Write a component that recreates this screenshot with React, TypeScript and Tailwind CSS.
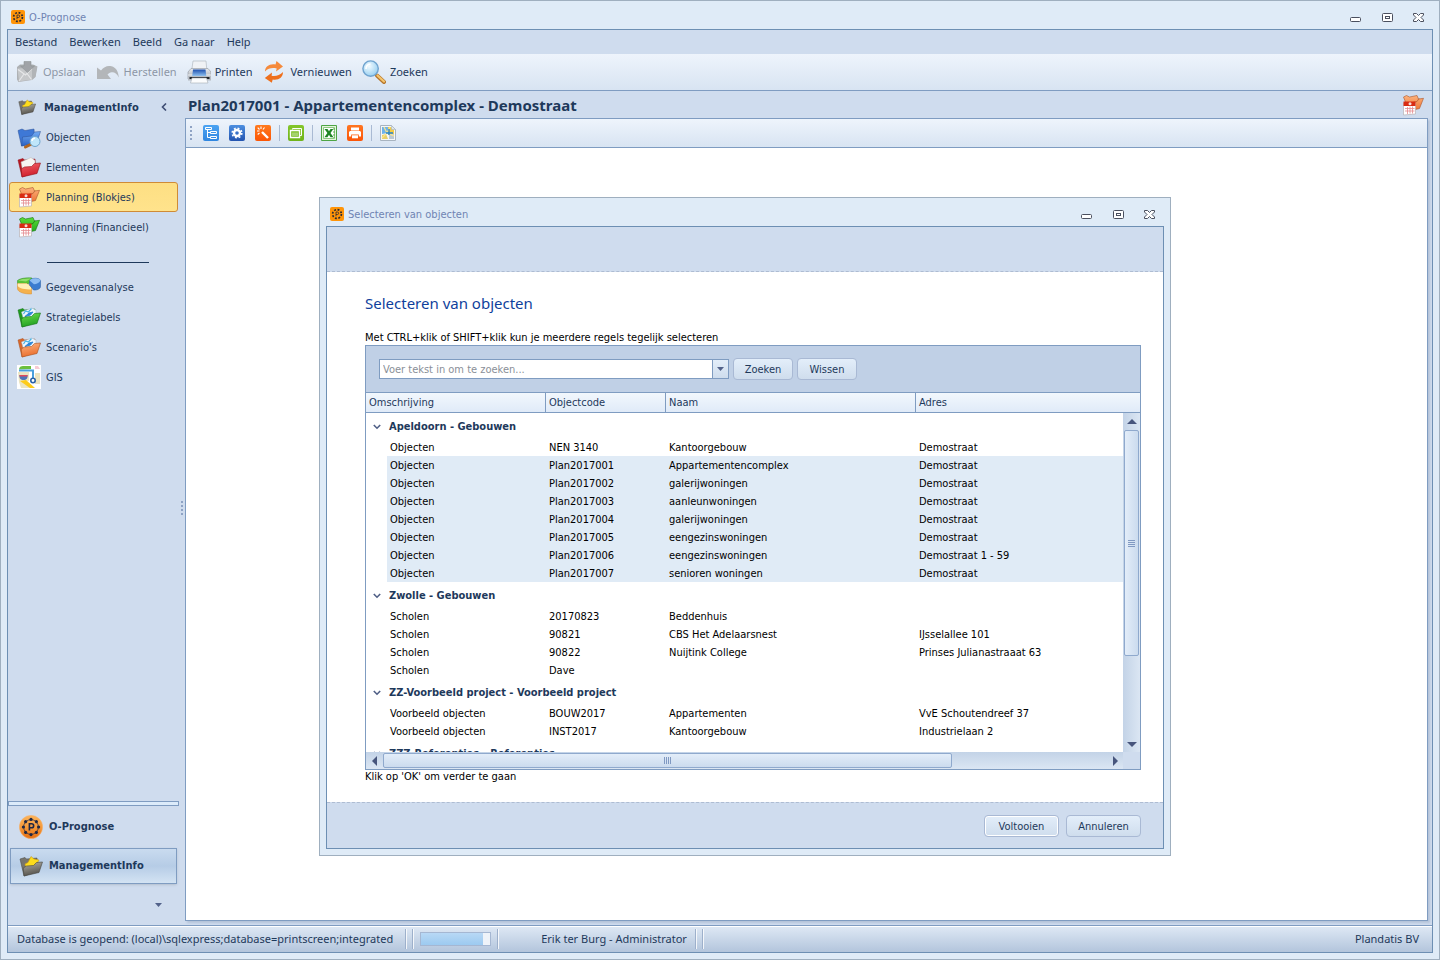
import { useState } from "react";
import type { ReactNode } from "react";
import clsx from "clsx";

/* ---------- icons ---------- */

function AppIcon() {
  return (
    <svg width="14" height="14" viewBox="0 0 14 14">
      <rect width="14" height="14" rx="2" fill="#ff9408" />
      <circle cx="7" cy="7" r="4.4" fill="none" stroke="#2b2a33" strokeWidth="1.7" strokeDasharray="1.9 1.555" />
      <path d="M6 9.2V5h1.4a1.2 1.2 0 0 1 0 2.5H6" fill="none" stroke="#2b2a33" strokeWidth=".8" />
    </svg>
  );
}

function AppIconRound() {
  const dots = [0, 45, 90, 135, 180, 225, 270, 315];
  return (
    <svg width="24" height="24" viewBox="0 0 24 24">
      <defs>
        <linearGradient id="orb" x1="0" y1="0" x2="0" y2="1">
          <stop offset="0" stopColor="#fbb35a" />
          <stop offset=".5" stopColor="#f59a3a" />
          <stop offset="1" stopColor="#e56d10" />
        </linearGradient>
      </defs>
      <circle cx="12" cy="12" r="11.6" fill="url(#orb)" stroke="#f6b26c" strokeWidth=".6" />
      <circle cx="12" cy="12" r="7.4" fill="none" stroke="#1f2744" strokeWidth=".7" />
      {dots.map((d) => (
        <circle key={d} cx="12" cy="4.4" r="1.6" fill="#1f2744" transform={`rotate(${d} 12 12)`} />
      ))}
      <path d="M10.4 15.6V8.700h2.200a2 2 0 0 1 0 4.100h-2.200" fill="none" stroke="#1f2744" strokeWidth="1.6" />
    </svg>
  );
}

function SaveIcon() {
  return (
    <svg width="24" height="24" viewBox="0 0 24 24">
      <path d="M2 7 5 4.500h13l4.500 2-2 10.500-3.500 3L3.500 22 2 19.500z" fill="#aeb1b4" />
      <path d="m2.500 8.500 14.500-.8V19.500L4 21.500z" fill="#c6c8ca" />
      <path d="m17 7.700 5-1-1.700 10.100-3.300 2.700z" fill="#b1b4b7" />
      <path d="m3 9.500 7.500 5.500L17 8.500M4 21l5-7M16.500 19.500l-4.500-6" fill="none" stroke="#e6e7e8" strokeWidth="1.200" />
      <path d="M9 1.500h7v4.500h3.500l-7 6.500-7-6.500H9z" fill="#a0a3a7" stroke="#8f9396" strokeWidth=".6" />
    </svg>
  );
}

function UndoIcon() {
  return (
    <svg width="24" height="24" viewBox="0 0 24 24">
      <path d="M1 19V7.500l4 3c3-4 6.500-5.300 10.500-4.300 4.500 1.200 7 5.300 7.300 11.300-2-4-4.500-5.500-7-5.200-1.800.2-3.300 1-4.300 2.200l3.500 4.500z" fill="#b3b6b9" />
    </svg>
  );
}

function PrinterIcon() {
  return (
    <svg width="24" height="24" viewBox="0 0 24 24">
      <defs>
        <linearGradient id="prn" x1="0" y1="0" x2="0" y2="1">
          <stop offset="0" stopColor="#e9ebee" />
          <stop offset="1" stopColor="#a3a9b1" />
        </linearGradient>
        <linearGradient id="prnBlue" x1="0" y1="0" x2="0" y2="1">
          <stop offset="0" stopColor="#1d4fae" />
          <stop offset="1" stopColor="#8fc1ef" />
        </linearGradient>
      </defs>
      <path d="M6 1h13l1 11H4.500z" fill="#f0f2f5" stroke="#b3bac2" strokeWidth=".7" />
      <path d="M1 12 4 8.500h17l3 3.500v7H1z" fill="url(#prn)" stroke="#8d949d" strokeWidth=".6" />
      <path d="M1 15h23v5.500H1z" fill="#b7bcc3" />
      <path d="M1 15h23" stroke="#eef0f2" />
      <path d="M6 9.500h12.500l.8 6.500H5.200z" fill="url(#prnBlue)" />
      <path d="M2.500 17h20v2h-20z" fill="#22262b" />
      <path d="M5 18h14.500l1.500 5H3.500z" fill="#fbfcfd" stroke="#a4abb3" strokeWidth=".6" />
    </svg>
  );
}

function RefreshIcon() {
  return (
    <svg width="24" height="24" viewBox="0 0 24 24">
      <path d="M3 11.500C3 6.500 7.500 3.500 13.500 4.500L14.500 1 21 6.500l-7 5 .7-3C10.500 7.500 6.500 8 3 11.500z" fill="#f58a3c" />
      <path d="M21 12c0 5.500-4.500 8.500-10.300 7.500l-.9 3.300L2.800 18l7.200-5.500-.4 3.200c4 .6 8.300-.2 11.400-3.700z" fill="#ee6f1c" />
    </svg>
  );
}

function SearchIcon() {
  return (
    <svg width="24" height="24" viewBox="0 0 24 24">
      <defs>
        <radialGradient id="lens" cx=".4" cy=".35" r=".7">
          <stop offset="0" stopColor="#f2fbff" />
          <stop offset="1" stopColor="#93cdf0" />
        </radialGradient>
      </defs>
      <path d="m15 15.500 7 6.500" stroke="#b5742a" strokeWidth="4" strokeLinecap="round" />
      <path d="m15.500 15.500 6.500 6" stroke="#f4c56e" strokeWidth="2.200" strokeLinecap="round" />
      <circle cx="8.600" cy="8.600" r="7.700" fill="url(#lens)" stroke="#6fa3cf" strokeWidth="1.400" />
      <path d="M4 9a4.800 4.800 0 0 1 4.500-5" stroke="#fff" strokeWidth="1.600" fill="none" />
    </svg>
  );
}

type FolderTone = "blue" | "red" | "green" | "orange" | "dark";

const tones: Record<FolderTone, { back: string; top: string; bottom: string; edge: string }> = {
  blue: { back: "#3767b8", top: "#6fa8f2", bottom: "#2f66c8", edge: "#2a4f94" },
  red: { back: "#b51822", top: "#f2626a", bottom: "#cf1f2c", edge: "#951019" },
  green: { back: "#1f9a1f", top: "#6fe04c", bottom: "#22a022", edge: "#157215" },
  orange: { back: "#d8672b", top: "#fdb482", bottom: "#ea6f2e", edge: "#a9501f" },
  dark: { back: "#77756d", top: "#b3b0a6", bottom: "#55534d", edge: "#45443f" },
};

function FolderIcon({ tone, size = 24, children }: { tone: FolderTone; size?: number; children?: ReactNode }) {
  const t = tones[tone];
  return (
    <svg width={size} height={size} viewBox="0 0 24 24">
      <defs>
        <linearGradient id={`folder-${tone}`} x1="0" y1="0" x2=".3" y2="1">
          <stop offset="0" stopColor={t.top} />
          <stop offset="1" stopColor={t.bottom} />
        </linearGradient>
      </defs>
      <path d="m1 5 5-1.500L7.500 5 18 4l1 13-14 5z" fill={t.back} stroke={t.edge} strokeWidth=".5" />
      {children}
      <path d="m5 22-.8-8 3.300-2 7-.5 3-3 6-.5-3.500 10.500z" fill={`url(#folder-${tone})`} stroke={t.edge} strokeWidth=".6" />
    </svg>
  );
}

function ObjectsIcon() {
  return (
    <svg width="24" height="24" viewBox="0 0 24 24">
      <defs>
        <linearGradient id="objFolder" x1="0" y1="0" x2="0" y2="1">
          <stop offset="0" stopColor="#75aef5" />
          <stop offset="1" stopColor="#2a61c2" />
        </linearGradient>
      </defs>
      <path d="m1 5.500 4-1.500 3 1.500 9-1.500L18 17 4.500 21z" fill="#3e78d6" stroke="#2a4f94" strokeWidth=".5" />
      <path d="m4.500 21 1-9 9-1 3-4 6-.5-4 12z" fill="url(#objFolder)" stroke="#2a4f94" strokeWidth=".5" />
      <path d="m13.500 19.500-5 2.500" stroke="#b2651f" strokeWidth="3" strokeLinecap="round" />
      <circle cx="18" cy="16.500" r="5" fill="#bfe6fa" stroke="#6da6cf" />
      <path d="M15 16a3 3 0 0 1 3-2.700" stroke="#fff" strokeWidth="1.400" fill="none" />
    </svg>
  );
}

function DataFolderIcon({ tone }: { tone: FolderTone }) {
  return (
    <FolderIcon tone={tone}>
      <path d="m4.500 7 10-4 4.500 2v8L7 16z" fill="#eef6fc" stroke="#9fb6c8" strokeWidth=".5" />
      <path d="m6.500 9 2-3 3 1 3-3.500" fill="none" stroke="#46b2e6" strokeWidth="1.200" />
      <path d="m8 11.500 4-3.500 4-1-2.500 3z" fill="#2c86d8" stroke="#2c86d8" />
    </FolderIcon>
  );
}

function PlanningIcon({ tone }: { tone: "orange" | "green" }) {
  const c = tone === "orange" ? ["#fdb37d", "#ec6f2f", "#a9542a"] : ["#5bdc3a", "#1fa51a", "#15700f"];
  return (
    <svg width="24" height="24" viewBox="0 0 24 24">
      <defs>
        <linearGradient id={`plan-${tone}`} x1="0" y1="0" x2="0" y2="1">
          <stop offset="0" stopColor={c[0]} />
          <stop offset="1" stopColor={c[1]} />
        </linearGradient>
      </defs>
      <path d="m2.500 4 3-1.500 3 1.500L16 2.500 17.500 6l5-.7-4 10.200L8 18z" fill={`url(#plan-${tone})`} stroke={c[2]} strokeWidth=".6" />
      <path d="m9 10 7-1.500 2-3" fill="none" stroke={c[2]} strokeWidth=".7" />
      <path d="M2.500 10h12v11l-12 1z" fill="#fff" stroke="#b9b2b4" strokeWidth=".7" />
      <path d="M2.500 8.500h12V13h-12z" fill="#d92b12" />
      <circle cx="9" cy="10.800" r="1.500" fill="#f3dcd7" />
      <path d="M6.500 14v7M9 13.500v7M11.500 13.500v7M4 15.500h9.500M4 18h9.500" stroke="#e58b8f" strokeWidth=".8" />
    </svg>
  );
}

function ManageIcon({ size = 24 }: { size?: number }) {
  return (
    <FolderIcon tone="dark" size={size}>
      <path d="m12 2.500 3 2.500 5 1-2 3.500-3 3-8 1.500-1-4 3-1.500z" fill="#fddc1c" stroke="#c99a10" strokeWidth=".6" />
    </FolderIcon>
  );
}

function AnalysisIcon() {
  return (
    <svg width="24" height="24" viewBox="0 0 24 24">
      <path d="M.500 5.500C3 3.500 8 2.500 15 3v4L9 9.500.5 8.500z" fill="#56c234" stroke="#2e8620" strokeWidth=".5" />
      <path d="M1 5.500C4 4 8 3.200 14 3.500L9 6.500z" fill="#93dd6c" />
      <path d="M.5 8.500h9L14.500 12v7C7 19 1.500 17.500.5 14z" fill="#f5b14d" stroke="#d98d2b" strokeWidth=".5" />
      <path d="M.8 8.500h9L14.300 12v2.500C8 14.500 2 13.500.8 11z" fill="#fff0b8" />
      <path d="M12.500 5.500c2-3 10-3 11 0v6c0 2.500-4 4-7 3.500l-4-5z" fill="#3b7cd0" stroke="#245a9f" strokeWidth=".5" />
      <path d="M12.500 5.500c2-3 10-3 11 0-1.500 2.500-4 3.700-6.500 3.700z" fill="#8cbcf2" />
    </svg>
  );
}

function GisIcon() {
  return (
    <svg width="24" height="24" viewBox="0 0 24 24">
      <path d="M0 0h24v24H0z" fill="#fff" />
      <path d="M2 4.500C2 2 4 1 6 1h8v3z" fill="#6bbf3e" />
      <path d="M18 1h3l2 3h-5z" fill="#f8cad4" />
      <path d="M1 7h11v9L2 17zM18 8h5v11h-5z" fill="#ebe4c2" />
      <path d="M2 17h7l5 6H4z" fill="#ebe4c2" />
      <path d="m3 16 10 7h5l-9-8z" fill="#fdcb1a" />
      <path d="M2 5.500h14v9" fill="none" stroke="#4a9fdc" strokeWidth="2" />
      <path d="M2.500 10h8c.5 3-1 5-4 5s-4.500-2-4-5z" fill="#4d74b8" />
      <path d="M2.500 10h8v1.500h-8z" fill="#e0485a" />
      <circle cx="16" cy="15.500" r="2.200" fill="#fff" stroke="#2a62a8" strokeWidth="1.600" />
    </svg>
  );
}

function Tile({ color, to, children }: { color: string; to: string; children: ReactNode }) {
  const id = `tile-${color.slice(1)}`;
  return (
    <svg width="16" height="16" viewBox="0 0 16 16">
      <defs>
        <linearGradient id={id} x1="0" y1="0" x2="0" y2="1">
          <stop offset="0" stopColor={color} />
          <stop offset="1" stopColor={to} />
        </linearGradient>
      </defs>
      <rect width="16" height="16" rx="2" fill={`url(#${id})`} />
      {children}
    </svg>
  );
}

function TreeTile() {
  return (
    <Tile color="#4ba3f2" to="#2f86e0">
      <path d="M2.500 2.500h6v2h-6zM7.500 6.500h6v2h-6zM7.500 11.500h6v2h-6zM4.500 4.500v8h3M4.500 7.500h3" fill="none" stroke="#fff" strokeWidth="1" />
    </Tile>
  );
}

function GearTile() {
  return (
    <Tile color="#4d8fe0" to="#2354b0">
      <circle cx="8" cy="8" r="3" fill="none" stroke="#fff" strokeWidth="2.400" />
      <circle cx="8" cy="8" r="4.800" fill="none" stroke="#fff" strokeWidth="1.600" strokeDasharray="1.900 1.870" />
    </Tile>
  );
}

function WandTile() {
  return (
    <Tile color="#ff7a1e" to="#fb5506">
      <path d="m7 7 6 6" stroke="#fff" strokeWidth="2.400" />
      <path d="M6 1.500V4M2 6h2.500M2.700 2.700 4.500 4.500M9.500 2.500 8 4.500M2.700 9.500 4.500 8" stroke="#fff" strokeWidth="1.100" />
    </Tile>
  );
}

function WindowTile() {
  return (
    <Tile color="#84c62a" to="#6fb31a">
      <path d="M4.500 4.500v-1h9v7H12" fill="none" stroke="#fff" />
      <path d="M2.500 5.500h9v7h-9z" fill="none" stroke="#fff" strokeWidth="1.400" />
      <path d="M4 7.500h6V11H4z" fill="#fff" opacity=".35" />
    </Tile>
  );
}

function ExcelTile() {
  return (
    <svg width="16" height="16" viewBox="0 0 16 16">
      <path d="M.5.500h15v15H.5z" fill="#e6f4de" stroke="#4ea545" />
      <path d="M2.500 2.500h11v11h-11z" fill="#fff" stroke="#8cc97f" />
      <path d="M3.500 4h3L8 6.300 9.500 4h2.800L9.500 8l3 4.300h-3L8 9.800l-1.600 2.500h-3L6.400 8z" fill="#1f8424" />
      <path d="M13 3v10" stroke="#58b04e" strokeDasharray="2 1" />
    </svg>
  );
}

function PrintTile() {
  return (
    <Tile color="#ff7622" to="#fb5508">
      <path d="M4 2.500h8v3H4z" fill="#fff" />
      <path d="M3 6h10l1 1v4.500h-2.200v-2H4.200v2H2V7z" fill="#fff" />
      <path d="M5 10.300h6v3H5z" fill="#fff" />
    </Tile>
  );
}

function MapTile() {
  return (
    <svg width="16" height="16" viewBox="0 0 16 16">
      <path d="M.5.500h11l4 4v11H.5z" fill="#f4f6f8" stroke="#a8b4c0" />
      <path d="M2 2h6v6l-6 1z" fill="#6fb2ea" />
      <path d="M8 2h3l3 3v4l-6 1z" fill="#f2cb45" />
      <path d="m2 10 4-1 2 5H2z" fill="#e8cf6a" />
      <path d="m9 10 5-1v5H9z" fill="#b9c8d6" />
      <path d="m2 13 5-5 3-6M4 2l3 6 7 3" fill="none" stroke="#fbe48a" strokeWidth="1.200" />
      <path d="M9 4v6M6 8h7" stroke="#1f83d2" strokeWidth="1.300" />
      <path d="m11.500.500 4 4h-4z" fill="#dfe6ec" stroke="#a8b4c0" strokeWidth=".6" />
    </svg>
  );
}

function Triangle({ dir }: { dir: "up" | "down" | "left" | "right" }) {
  const d = {
    up: "M0 7 5 2l5 5z",
    down: "M0 3h10L5 8z",
    left: "M7 0v10L2 5z",
    right: "M3 0v10l5-5z",
  }[dir];
  return (
    <svg width="10" height="10" viewBox="0 0 10 10">
      <path d={d} fill="#47557c" />
    </svg>
  );
}

function CaretDown() {
  return (
    <svg width="7" height="4" viewBox="0 0 7 4">
      <path d="M0 0h7L3.500 4z" fill="#52628a" />
    </svg>
  );
}

/* ---------- window chrome ---------- */

function WindowButtons() {
  return (
    <div className="flex items-center gap-5 pt-0.5">
      <button aria-label="Minimaliseren">
        <svg width="12" height="12" viewBox="0 0 12 12">
          <rect x="1.500" y="5.500" width="10" height="4" rx="1" fill="#fff" stroke="#4a4f5e" />
        </svg>
      </button>
      <button aria-label="Maximaliseren">
        <svg width="12" height="12" viewBox="0 0 12 12">
          <rect x="1.500" y="1.500" width="10" height="8" rx="1" fill="#fff" stroke="#4a4f5e" />
          <rect x="4.500" y="4.500" width="4" height="2" fill="#fff" stroke="#4a4f5e" />
        </svg>
      </button>
      <button aria-label="Sluiten">
        <svg width="12" height="12" viewBox="0 0 12 12">
          <path d="M.5 1.500h3l2 2 2-2h3V3L8 5.500 10.500 8v1.500h-3l-2-2-2 2h-3V8L3 5.500.5 3z" fill="#fff" stroke="#4a4f5e" />
        </svg>
      </button>
    </div>
  );
}

function TitleBar({ title }: { title: string }) {
  return (
    <div className="flex h-7 shrink-0 items-center gap-1 pt-1 pr-2 pl-1 text-[#6f84b3]">
      <AppIcon />
      <span className="flex-1 pt-0.5">{title}</span>
      <WindowButtons />
    </div>
  );
}

function DialogButton({ children, primary }: { children: string; primary?: boolean }) {
  return (
    <button
      className={clsx(
        "h-[22px] rounded-sm border border-[#a9b9d4] bg-linear-to-b from-[#e3eefa] to-[#cfdded] pt-0.5",
        primary && "shadow-[inset_0_0_0_1px_#fff]",
      )}
    >
      {children}
    </button>
  );
}

/* ---------- data ---------- */

const menu = ["Bestand", "Bewerken", "Beeld", "Ga naar", "Help"];

const actions = [
  { label: "Opslaan", icon: <SaveIcon />, disabled: true },
  { label: "Herstellen", icon: <UndoIcon />, disabled: true },
  { label: "Printen", icon: <PrinterIcon /> },
  { label: "Vernieuwen", icon: <RefreshIcon /> },
  { label: "Zoeken", icon: <SearchIcon /> },
];

const navTop = [
  { label: "Objecten", icon: <ObjectsIcon /> },
  {
    label: "Elementen",
    icon: (
      <FolderIcon tone="red">
        <path d="m4 7 10-4.500 4 3V15L6 18z" fill="#f7f5f3" stroke="#b8b2ae" strokeWidth=".5" />
      </FolderIcon>
    ),
  },
  { label: "Planning (Blokjes)", icon: <PlanningIcon tone="orange" /> },
  { label: "Planning (Financieel)", icon: <PlanningIcon tone="green" /> },
];

const navBottom = [
  { label: "Gegevensanalyse", icon: <AnalysisIcon /> },
  { label: "Strategielabels", icon: <DataFolderIcon tone="green" /> },
  { label: "Scenario's", icon: <DataFolderIcon tone="orange" /> },
  { label: "GIS", icon: <GisIcon /> },
];

const tools = [
  [
    { label: "Boomstructuur", icon: <TreeTile /> },
    { label: "Instellingen", icon: <GearTile /> },
    { label: "Wizard", icon: <WandTile /> },
  ],
  [{ label: "Vensters", icon: <WindowTile /> }],
  [
    { label: "Excel", icon: <ExcelTile /> },
    { label: "Afdrukken", icon: <PrintTile /> },
  ],
  [{ label: "Kaart", icon: <MapTile /> }],
];

const groups = [
  {
    name: "Apeldoorn - Gebouwen",
    rows: [
      ["Objecten", "NEN 3140", "Kantoorgebouw", "Demostraat"],
      ["Objecten", "Plan2017001", "Appartementencomplex", "Demostraat"],
      ["Objecten", "Plan2017002", "galerijwoningen", "Demostraat"],
      ["Objecten", "Plan2017003", "aanleunwoningen", "Demostraat"],
      ["Objecten", "Plan2017004", "galerijwoningen", "Demostraat"],
      ["Objecten", "Plan2017005", "eengezinswoningen", "Demostraat"],
      ["Objecten", "Plan2017006", "eengezinswoningen", "Demostraat 1 - 59"],
      ["Objecten", "Plan2017007", "senioren woningen", "Demostraat"],
    ],
  },
  {
    name: "Zwolle - Gebouwen",
    rows: [
      ["Scholen", "20170823", "Beddenhuis", ""],
      ["Scholen", "90821", "CBS Het Adelaarsnest", "IJsselallee 101"],
      ["Scholen", "90822", "Nuijtink College", "Prinses Julianastraaat 63"],
      ["Scholen", "Dave", "", ""],
    ],
  },
  {
    name: "ZZ-Voorbeeld project - Voorbeeld project",
    rows: [
      ["Voorbeeld objecten", "BOUW2017", "Appartementen", "VvE Schoutendreef 37"],
      ["Voorbeeld objecten", "INST2017", "Kantoorgebouw", "Industrielaan 2"],
    ],
  },
  { name: "ZZZ-Referenties - Referenties", rows: [] as string[][] },
];

/* ---------- sidebar ---------- */

function NavItem({ label, icon, active, onClick }: { label: string; icon: ReactNode; active: boolean; onClick: () => void }) {
  return (
    <button
      onClick={onClick}
      className={clsx(
        "flex h-[30px] items-center gap-[5px] rounded-[3px] border pl-[7px] text-left",
        active ? "border-[#cf8b36] bg-linear-to-b from-[#fddf83] to-[#ffe38c]" : "border-transparent",
      )}
    >
      {icon}
      <span className="pt-0.5">{label}</span>
    </button>
  );
}

function Sidebar() {
  const [active, setActive] = useState("Planning (Blokjes)");

  return (
    <aside className="flex w-[171px] shrink-0 flex-col">
      <div className="flex h-[31px] items-center gap-2 pr-3 pl-[10px] font-bold">
        <ManageIcon size={18} />
        <span className="flex-1 pt-0.5">ManagementInfo</span>
        <button aria-label="Inklappen">
          <svg width="6" height="8" viewBox="0 0 6 8">
            <path d="M5 .5 1.500 4 5 7.500" fill="none" stroke="#3f4e74" strokeWidth="1.600" />
          </svg>
        </button>
      </div>
      <nav className="flex flex-1 flex-col px-px">
        {navTop.map((n) => (
          <NavItem key={n.label} {...n} active={active === n.label} onClick={() => setActive(n.label)} />
        ))}
        <div className="flex h-[30px] items-center">
          <hr className="mt-2.5 ml-[38px] w-[102px] border-[#1e395b]" />
        </div>
        {navBottom.map((n) => (
          <NavItem key={n.label} {...n} active={active === n.label} onClick={() => setActive(n.label)} />
        ))}
      </nav>
      <div className="h-[5px] border border-[#7f9cc1] bg-[#dcebfa]" />
      <div className="flex flex-col gap-px px-0.5 pt-px font-bold">
        <button className="flex h-10 items-center gap-1.5 pl-[9px]">
          <AppIconRound />
          O-Prognose
        </button>
        <button className="flex h-9 items-center gap-1.5 border border-[#7f9cc1] bg-linear-to-b from-[#c9dbef] via-[#b6cce6] to-[#d3e3f3] pl-2 shadow-sm">
          <ManageIcon />
          ManagementInfo
        </button>
      </div>
      <button aria-label="Meer" className="flex h-[41px] items-center justify-end pr-[17px]">
        <CaretDown />
      </button>
    </aside>
  );
}

/* ---------- dialog ---------- */

function ObjectGrid() {
  const [query, setQuery] = useState("");
  const head = "border-r border-[#7f9cc1] px-[3px] text-left font-normal last:border-r-0";

  return (
    <div className="border border-[#7f9cc1] bg-white">
      <div className="flex h-[46px] items-center gap-1 bg-[#c0d0e6] pl-[13px]">
        <div className="flex h-5 w-[350px] border border-[#7f9cc1] bg-white">
          <input
            aria-label="Zoeken"
            value={query}
            onChange={(e) => setQuery(e.target.value)}
            placeholder="Voer tekst in om te zoeken..."
            className="min-w-0 flex-1 px-[3px] pt-0.5 text-black outline-none placeholder:text-[#8a8f98]"
          />
          <button
            aria-label="Eerdere zoekopdrachten"
            className="flex w-4 items-center justify-center border-l border-[#7f9cc1] bg-linear-to-b from-[#e3eefa] to-[#cfdded]"
          >
            <CaretDown />
          </button>
        </div>
        <div className="grid grid-cols-[60px_60px] gap-1">
          <DialogButton>Zoeken</DialogButton>
          <DialogButton>Wissen</DialogButton>
        </div>
      </div>

      <div className="relative h-[360px] overflow-hidden">
        <table className="w-full table-fixed border-separate border-spacing-0">
          <colgroup>
            <col className="w-[21px]" />
            <col className="w-[159px]" />
            <col className="w-[120px]" />
            <col className="w-[250px]" />
            <col />
          </colgroup>
          <thead>
            <tr className="h-[21px] bg-linear-to-b from-[#f3f8fd] to-[#dfeaf8] *:border-y *:border-y-[#7f9cc1]">
              <th colSpan={2} className={head}>Omschrijving</th>
              <th className={head}>Objectcode</th>
              <th className={head}>Naam</th>
              <th className={head}>Adres</th>
            </tr>
          </thead>
          {groups.map((g) => (
            <tbody key={g.name} className="text-black">
              <tr className="h-[25px] text-[#1e395b]">
                <th colSpan={5} className="pt-0.5 text-left">
                  <div className="flex items-center gap-2 pl-[7px]">
                    <svg width="8" height="6" viewBox="0 0 8 6">
                      <path d="m.8 1 3.200 3.200L7.200 1" fill="none" stroke="#4f5f86" strokeWidth="1.600" />
                    </svg>
                    {g.name}
                  </div>
                </th>
              </tr>
              {g.rows.map((row) => {
                const cell = row[1].startsWith("Plan") ? "bg-[#e0ebf6] px-[3px] pt-0.5" : "px-[3px] pt-0.5";
                return (
                  <tr key={row[1]} className="h-[18px]">
                    <td />
                    {row.map((v, i) => (
                      <td key={i} className={cell}>{v}</td>
                    ))}
                  </tr>
                );
              })}
            </tbody>
          ))}
        </table>
        <div className="absolute top-[21px] right-0 bottom-0 flex w-[17px] flex-col items-center bg-linear-to-r from-[#c3d3e7] to-[#dbe6f3]">
          <button aria-label="Omhoog" className="flex h-[17px] items-center"><Triangle dir="up" /></button>
          <div className="flex h-[226px] w-[15px] flex-col items-center justify-center gap-px rounded-xs border border-[#8fa9cd] bg-linear-to-r from-[#e3edf9] to-[#cbdbee]">
            {[0, 1, 2, 3].map((i) => <i key={i} className="h-px w-[7px] bg-[#8099c2]" />)}
          </div>
          <div className="flex-1" />
          <button aria-label="Omlaag" className="flex h-[17px] items-center"><Triangle dir="down" /></button>
        </div>
      </div>

      <div className="flex h-[17px] items-center bg-linear-to-b from-[#c3d3e7] to-[#dbe6f3]">
        <button aria-label="Links" className="flex w-[17px] justify-center"><Triangle dir="left" /></button>
        <div className="flex h-[15px] w-[569px] items-center justify-center gap-px rounded-xs border border-[#8fa9cd] bg-linear-to-b from-[#e3edf9] to-[#cbdbee]">
          {[0, 1, 2, 3].map((i) => <i key={i} className="h-[7px] w-px bg-[#8099c2]" />)}
        </div>
        <div className="flex-1" />
        <button aria-label="Rechts" className="flex w-[17px] justify-center"><Triangle dir="right" /></button>
        <div className="h-full w-[17px] bg-[#cfdcee]" />
      </div>
    </div>
  );
}

function SelectDialog() {
  return (
    <section
      role="dialog"
      aria-label="Selecteren van objecten"
      className="absolute top-[49px] left-[133px] flex w-[852px] flex-col border border-[#9fafbf] bg-[#dfebf7] px-1.5 pb-1.5"
    >
      <TitleBar title="Selecteren van objecten" />
      <div className="border border-[#6d8fb3] bg-white">
        <div className="h-[45px] border-b border-dashed border-[#aebcd2] bg-[#cfdcee]" />
        <div className="flex h-[530px] flex-col pr-[22px] pl-[38px]">
          <h2 className="mt-[19px] font-[Noto_Sans] text-[15px] leading-6 text-[#0f3f9c]">Selecteren van objecten</h2>
          <p className="mt-4 leading-[14px] text-black">
            Met CTRL+klik of SHIFT+klik kun je meerdere regels tegelijk selecteren
          </p>
          <ObjectGrid />
          <p className="leading-[14px] text-black">Klik op 'OK' om verder te gaan</p>
        </div>
        <div className="flex h-[46px] items-center justify-end border-t border-dashed border-[#aebcd2] bg-[#cfdcee] pr-[22px]">
          <div className="grid grid-cols-[75px_75px] gap-[7px]">
            <DialogButton primary>Voltooien</DialogButton>
            <DialogButton>Annuleren</DialogButton>
          </div>
        </div>
      </div>
    </section>
  );
}

/* ---------- page ---------- */

function StatusGrip() {
  return (
    <span className="flex gap-[5px]">
      <i className="h-5 w-0.5 border-l border-[#9db0cb] bg-white/80" />
      <i className="h-5 w-0.5 border-l border-[#9db0cb] bg-white/80" />
    </span>
  );
}

export default function App() {
  return (
    <div className="flex h-screen flex-col border border-[#9fafbf] bg-[#dfebf7] px-1.5 pb-1.5 font-['DejaVu_Sans_Condensed','DejaVu_Sans',sans-serif] text-[11px] leading-4 text-[#1e395b]">
      <TitleBar title="O-Prognose" />
      <div className="flex min-h-0 flex-1 flex-col border border-[#6d8fb3] bg-[#cfdcee]">
        <div className="flex h-6 shrink-0 items-center gap-3 px-[7px] font-[Noto_Sans]">
          {menu.map((m) => <button key={m}>{m}</button>)}
        </div>
        <div className="flex h-[37px] shrink-0 items-center gap-2.5 border-b border-[#7f9cc1] bg-linear-to-b from-[#eef4fc] to-[#d8e4f2] px-[7px] font-[Noto_Sans]">
          {actions.map((a) => (
            <button key={a.label} disabled={a.disabled} className="flex items-center gap-1 disabled:text-[#8d97a6]">
              {a.icon}
              {a.label}
            </button>
          ))}
        </div>

        <div className="flex min-h-0 flex-1 pr-1">
          <Sidebar />
          <div className="flex w-1.5 flex-col items-center justify-center gap-0.5">
            {[0, 1, 2, 3].map((i) => <i key={i} className="size-0.5 bg-[#8fa3c4]" />)}
          </div>
          <main className="flex min-w-0 flex-1 flex-col pb-1">
            <div className="flex h-[27px] items-center justify-between pr-[3px] pl-[3px]">
              <h1 className="font-[Noto_Sans] text-[15px] font-bold">Plan2017001 - Appartementencomplex - Demostraat</h1>
              <PlanningIcon tone="orange" />
            </div>
            <div className="flex min-h-0 flex-1 flex-col border border-[#7f9cc1] bg-white shadow-[2px_2px_2px_#b4c3d9]">
              <div className="flex h-[29px] shrink-0 items-center border-b border-[#7f9cc1] bg-linear-to-b from-[#eef4fc] to-[#d8e4f2] pl-1">
                <div className="mr-[11px] flex flex-col gap-0.5">
                  {[0, 1, 2, 3].map((i) => <i key={i} className="size-0.5 bg-[#8fa3c4]" />)}
                </div>
                {tools.map((set, i) => (
                  <div key={i} className={clsx("flex gap-2.5 pr-2", i > 0 && "border-l border-[#a9bad3] pl-2")}>
                    {set.map((t) => <button key={t.label} aria-label={t.label}>{t.icon}</button>)}
                  </div>
                ))}
              </div>
              <div className="relative flex-1">
                <SelectDialog />
              </div>
            </div>
          </main>
        </div>

        <footer className="flex h-[27px] shrink-0 items-center border-t border-[#7f9cc1] bg-linear-to-b from-[#dfe9f5] to-[#b3c5dc] px-[9px] font-[Noto_Sans] shadow-[inset_0_1px_0_#fff]">
          <span className="mr-3">Database is geopend: (local)\sqlexpress;database=printscreen;integrated</span>
          <StatusGrip />
          <div className="mx-1.5 h-[14px] w-[71px] border border-[#a5b7d2] bg-[#eef3f9]">
            <div className="h-full w-[62px] bg-linear-to-b from-[#b8d8f5] to-[#9ccaf0]" />
          </div>
          <i className="h-5 w-0.5 border-l border-[#9db0cb] bg-white/80" />
          <span className="mr-2 ml-[42px]">Erik ter Burg - Administrator</span>
          <StatusGrip />
          <span className="ml-auto pr-1">Plandatis BV</span>
        </footer>
      </div>
    </div>
  );
}
